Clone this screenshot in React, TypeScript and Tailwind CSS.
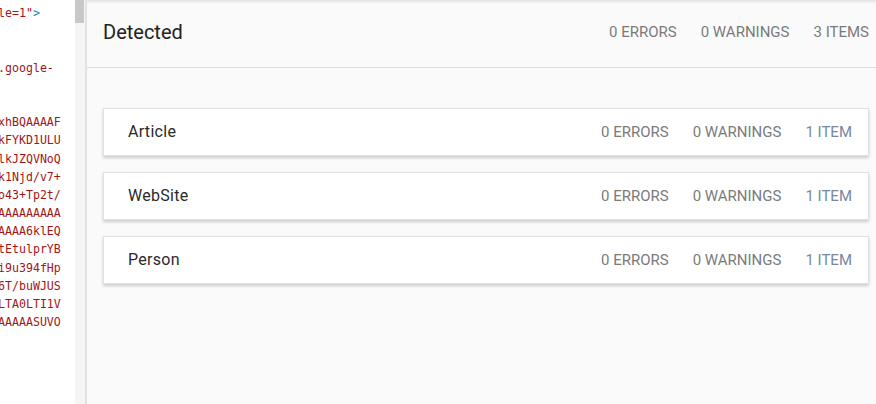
import React from "react";

type Line = { text: string; tail?: string };

const codeLines: Line[] = [
  { text: 'le=1"', tail: ">" },
  { text: "" },
  { text: "" },
  { text: ".google-" },
  { text: "" },
  { text: "" },
  { text: "xhBQAAAAF" },
  { text: "kFYKD1ULU" },
  { text: "lkJZQVNoQ" },
  { text: "k1Njd/v7+" },
  { text: "o43+Tp2t/" },
  { text: "AAAAAAAAA" },
  { text: "AAAA6klEQ" },
  { text: "tEtulprYB" },
  { text: "i9u394fHp" },
  { text: "6T/buWJUS" },
  { text: "LTA0LTI1V" },
  { text: "AAAAASUVO" },
];

const items = ["Article", "WebSite", "Person"];

const Stat: React.FC<{ label: string; className?: string }> = ({
  label,
  className,
}) => <span className={`ml-6 first:ml-0 ${className ?? ""}`}>{label}</span>;

const App: React.FC = () => {
  return (
    <div className="flex h-[404px] w-[876px] overflow-hidden bg-white">
      {/* Source panel */}
      <div className="flex h-full w-[85px] shrink-0 bg-white">
        <div className="flex-1 overflow-hidden pt-[4px] font-['DejaVu_Sans_Mono',monospace] text-[11.6px] leading-[18.2px] text-[#a31515]">
          {codeLines.map((line, i) => (
            <div key={i} className="-ml-[2px] h-[18.2px] whitespace-pre">
              {line.text}
              {line.tail && <span className="text-[#1a86a8]">{line.tail}</span>}
            </div>
          ))}
        </div>
        <div className="flex w-[10px] shrink-0 bg-[#f5f5f5]">
          <div className="h-[23px] w-[9px] bg-[#c8c8c8]" />
        </div>
      </div>
      <div className="w-[2px] shrink-0 bg-[#e2e2e2]" />

      {/* Results panel */}
      <div className="relative flex flex-1 flex-col bg-[#fafafa] font-['Roboto',sans-serif]">
        <div className="pointer-events-none absolute inset-x-0 top-0 h-[4px] bg-gradient-to-b from-[#e4e4e4] to-transparent" />
        <div className="flex h-[68px] items-center border-b border-[#e0e0e0] pb-[3px] pl-4 pr-[7px]">
          <h1 className="text-[20px] text-[#212121]">Detected</h1>
          <div className="ml-auto flex text-[15px] text-[#7a7a7a]">
            <Stat label="0 ERRORS" />
            <Stat label="0 WARNINGS" />
            <Stat label="3 ITEMS" />
          </div>
        </div>

        <div className="flex flex-col gap-4 pl-4 pr-[7px] pt-10">
          {items.map((name) => (
            <div
              key={name}
              className="flex h-[48px] items-center border border-[#e0e0e0] bg-white pl-6 pr-4 shadow-[0_2px_3px_rgba(0,0,0,0.18)]"
            >
              <span className="text-[16px] tracking-[0.3px] text-[#2a2a2a]">
                {name}
              </span>
              <div className="ml-auto flex text-[15px] text-[#7a7a7a]">
                <Stat label="0 ERRORS" />
                <Stat label="0 WARNINGS" />
                <Stat label="1 ITEM" className="text-[#78889a]" />
              </div>
            </div>
          ))}
        </div>
      </div>
    </div>
  );
};

export default App;
